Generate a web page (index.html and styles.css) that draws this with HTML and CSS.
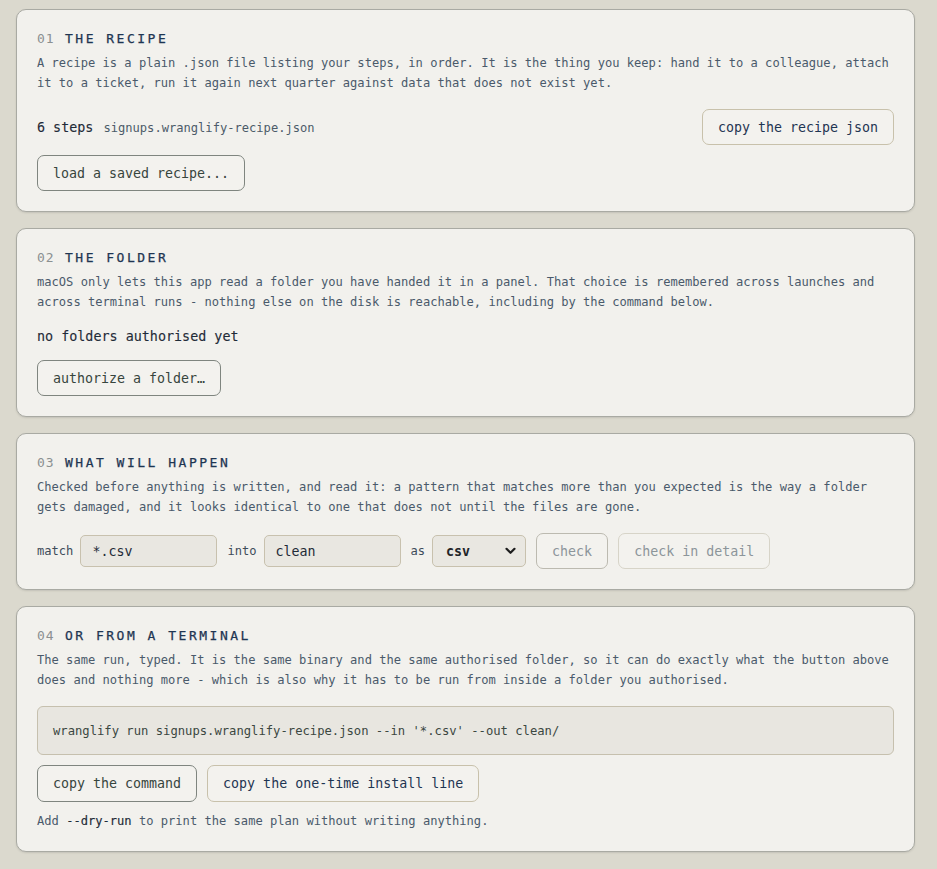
FILE: index.html
```html
<!DOCTYPE html>
<html lang="en">
<head>
<meta charset="utf-8">
<title>wranglify</title>
<link rel="stylesheet" href="styles.css">
</head>
<body>
<main class="page">
  <section class="card">
    <h2 class="title"><span class="num">01</span> THE RECIPE</h2>
    <p class="desc">A recipe is a plain .json file listing your steps, in order. It is the thing you keep: hand it to a colleague, attach it to a ticket, run it again next quarter against data that does not exist yet.</p>
    <div class="recipe-row">
      <div class="recipe-info"><span class="steps">6 steps</span><span class="fname">signups.wranglify-recipe.json</span></div>
      <button class="btn btn-soft">copy the recipe json</button>
    </div>
    <div class="actions tight">
      <button class="btn btn-strong">load a saved recipe...</button>
    </div>
  </section>

  <section class="card">
    <h2 class="title"><span class="num">02</span> THE FOLDER</h2>
    <p class="desc">macOS only lets this app read a folder you have handed it in a panel. That choice is remembered across launches and across terminal runs - nothing else on the disk is reachable, including by the command below.</p>
    <p class="status">no folders authorised yet</p>
    <div class="actions folder-actions">
      <button class="btn btn-strong">authorize a folder…</button>
    </div>
  </section>

  <section class="card">
    <h2 class="title"><span class="num">03</span> WHAT WILL HAPPEN</h2>
    <p class="desc">Checked before anything is written, and read it: a pattern that matches more than you expected is the way a folder gets damaged, and it looks identical to one that does not until the files are gone.</p>
    <div class="form-row">
      <label class="field"><span class="lbl">match</span><input class="input" type="text" value="*.csv"></label>
      <label class="field"><span class="lbl">into</span><input class="input" type="text" value="clean"></label>
      <label class="field"><span class="lbl">as</span>
        <span class="select-wrap">
          <select class="select"><option>csv</option><option>json</option></select>
          <svg class="chev" width="11" height="8" viewBox="0 0 11 8" aria-hidden="true"><path d="M1.5 1.8 L5.5 5.8 L9.5 1.8" fill="none" stroke="#1d1d1d" stroke-width="2.2" stroke-linecap="round" stroke-linejoin="round"/></svg>
        </span>
      </label>
      <button class="btn btn-disabled" disabled>check</button>
      <button class="btn btn-disabled btn-faint" disabled>check in detail</button>
    </div>
  </section>

  <section class="card">
    <h2 class="title"><span class="num">04</span> OR FROM A TERMINAL</h2>
    <p class="desc">The same run, typed. It is the same binary and the same authorised folder, so it can do exactly what the button above does and nothing more - which is also why it has to be run from inside a folder you authorised.</p>
    <pre class="cmd">wranglify run signups.wranglify-recipe.json --in '*.csv' --out clean/</pre>
    <div class="actions cmd-actions">
      <button class="btn btn-strong">copy the command</button>
      <button class="btn btn-soft">copy the one-time install line</button>
    </div>
    <p class="hint">Add <code class="flag">--dry-run</code> to print the same plan without writing anything.</p>
  </section>
</main>
</body>
</html>
```
FILE: styles.css
```css
* { box-sizing: border-box; }

html, body {
  margin: 0;
  padding: 0;
  background: #dbd9ce;
}

body {
  font-family: "DejaVu Sans Mono", "Liberation Mono", monospace;
  color: #1f2b38;
}

.page {
  width: 931px;
  padding: 9px 16px 16px 16px;
  display: flex;
  flex-direction: column;
  gap: 16px;
}

.card {
  background: #f2f1ed;
  border: 1px solid #a9aaa3;
  border-radius: 10px;
  padding: 20px 20px 20px 20px;
  box-shadow: 0 1px 2px rgba(60, 60, 50, 0.14);
}

.title {
  margin: 0;
  font-size: 13px;
  line-height: 18px;
  font-weight: 400;
  -webkit-text-stroke: 0.25px #1e3552;
  letter-spacing: 2.5px;
  color: #1e3552;
}

.title .num {
  color: #8b9091;
  font-weight: 400;
  -webkit-text-stroke: 0;
  letter-spacing: 1px;
}

.desc {
  margin: 5px 0 0 0;
  font-size: 12.1px;
  line-height: 20px;
  color: #4a5a6b;
}

.recipe-row {
  margin-top: 16px;
  display: flex;
  align-items: center;
  justify-content: space-between;
}

.recipe-info {
  display: flex;
  align-items: baseline;
}

.steps {
  font-size: 13.4px;
  -webkit-text-stroke: 0.12px #1f2b38;
  color: #1f2b38;
}

.fname {
  margin-left: 10px;
  font-size: 12.1px;
  color: #4c5b69;
}

.actions {
  display: flex;
  gap: 10px;
}

.actions.tight { margin-top: 10px; }

.status {
  margin: 15px 0 0 0;
  font-size: 13.4px;
  line-height: 20px;
  -webkit-text-stroke: 0.12px #1f2b38;
  color: #1f2b38;
}

.folder-actions { margin-top: 13px; }

.btn {
  font-family: "DejaVu Sans Mono", "Liberation Mono", monospace;
  font-size: 13.3px;
  height: 36px;
  padding: 0 15px;
  border-radius: 7px;
  background: #f3f2ee;
  cursor: pointer;
  white-space: nowrap;
}

.btn-strong {
  border: 1px solid #7f857f;
  color: #37453d;
}

.btn-soft {
  border: 1px solid #c8c1ab;
  color: #1e3552;
}

.btn-disabled {
  border: 1px solid #bcbab0;
  color: #8c959a;
  cursor: default;
}

.btn-faint {
  border-color: #d7d4c8;
}

.form-row {
  margin-top: 16px;
  display: flex;
  align-items: center;
  gap: 10px;
}

.field {
  display: flex;
  align-items: center;
  gap: 7px;
}

.lbl {
  font-size: 12.1px;
  color: #3e4c5a;
}

.input {
  width: 137px;
  height: 32px;
  padding: 0 11px;
  border: 1px solid #c8c1ae;
  border-radius: 5px;
  background: #e9e7e1;
  font-family: "DejaVu Sans Mono", "Liberation Mono", monospace;
  font-size: 13.3px;
  color: #1f2b38;
  outline: none;
}

.select-wrap {
  position: relative;
  display: inline-block;
}

.select {
  appearance: none;
  -webkit-appearance: none;
  width: 94px;
  height: 32px;
  padding: 0 0 0 13px;
  border: 1px solid #c8c1ae;
  border-radius: 5px;
  background: #e9e7e1;
  font-family: "DejaVu Sans Mono", "Liberation Mono", monospace;
  font-size: 13.3px;
  font-weight: 700;
  color: #222428;
  outline: none;
}

.chev {
  position: absolute;
  right: 10px;
  top: 12px;
  pointer-events: none;
}

.cmd {
  margin: 16px 0 0 0;
  padding: 14px 15px 13px 15px;
  background: #e8e6e0;
  border: 1px solid #c6c0ae;
  border-radius: 6px;
  font-family: "DejaVu Sans Mono", "Liberation Mono", monospace;
  font-size: 12.2px;
  line-height: 20px;
  color: #3b4741;
  white-space: pre;
}

.cmd-actions { margin-top: 10px; }
.cmd-actions .btn { height: 37px; }

.hint {
  margin: 9px 0 0 0;
  font-size: 12.1px;
  line-height: 20px;
  color: #4a5a6b;
}

.flag {
  font-family: inherit;
  font-size: inherit;
  -webkit-text-stroke: 0.15px #1f2b38;
  color: #1f2b38;
}
```
